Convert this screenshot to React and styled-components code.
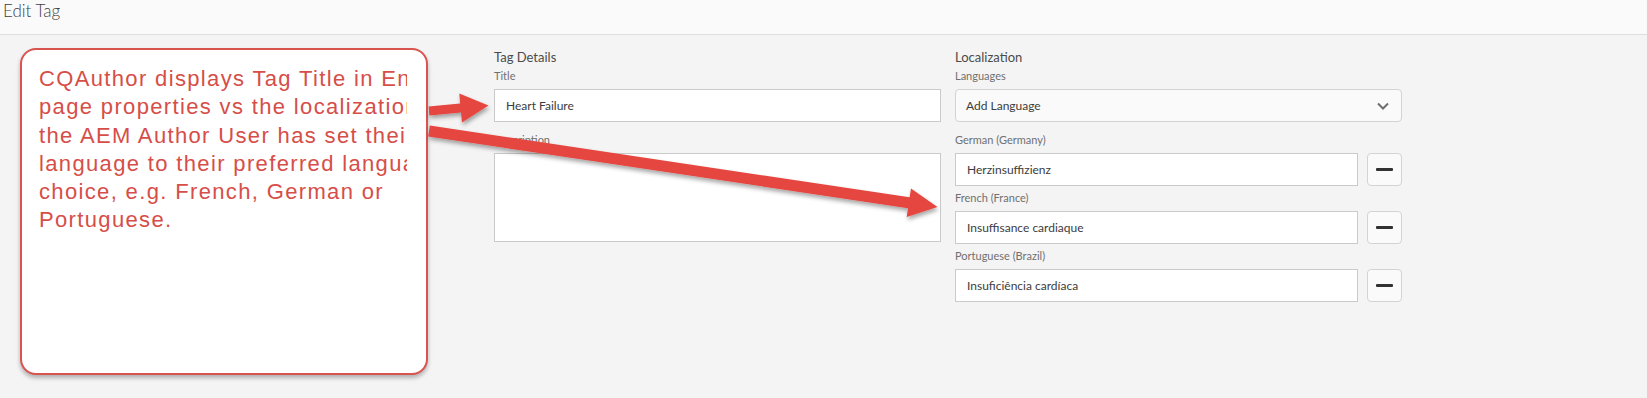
import React from 'react';
import styled, { createGlobalStyle } from 'styled-components';

const GlobalStyle = createGlobalStyle`
  html, body {
    margin: 0;
    padding: 0;
    background: #f4f4f4;
  }
  body {
    font-family: 'Lato', 'Open Sans', sans-serif;
  }
`;

const Page = styled.div`
  position: relative;
  width: 1647px;
  height: 398px;
  overflow: hidden;
  background: #f4f4f4;
`;

const Header = styled.header`
  height: 35px;
  box-sizing: border-box;
  background: #fafafa;
  border-bottom: 1px solid #dedede;
  padding: 1px 3px 0;
  font-size: 17px;
  line-height: 20px;
  font-weight: 300;
  color: #3f3f3f;
`;

const Body = styled.main`
  display: flex;
  align-items: flex-start;
`;

const Callout = styled.div`
  width: 408px;
  height: 327px;
  box-sizing: border-box;
  margin: 13px 0 0 20px;
  padding: 15px 19px 0 17px;
  background: #fff;
  border: 2px solid #d9534f;
  border-radius: 16px;
  box-shadow: 0 3px 4px rgba(0, 0, 0, 0.28);
`;

const CalloutText = styled.div`
  overflow: hidden;
  font-family: 'Liberation Sans', Arial, sans-serif;
  font-size: 22px;
  line-height: 28.3px;
  letter-spacing: 1.35px;
  color: #d64e48;
`;

const CalloutLine = styled.div`
  white-space: nowrap;
`;

const Form = styled.div`
  display: flex;
  gap: 14px;
  margin: 14px 0 0 66px;
`;

const Column = styled.section`
  width: 447px;
  display: flex;
  flex-direction: column;
`;

const SectionTitle = styled.h2`
  margin: 0 0 4px;
  font-size: 13px;
  line-height: 16px;
  font-weight: 400;
  color: #4b4b4b;
`;

const Field = styled.div`
  display: flex;
  flex-direction: column;
  margin-top: ${p => p.$top || 0}px;
`;

const Label = styled.label`
  font-size: 11px;
  line-height: 14px;
  color: #707070;
  margin-bottom: 6px;
`;

const TextInput = styled.input`
  height: 33px;
  width: 100%;
  box-sizing: border-box;
  margin: 0;
  padding: 0 11px;
  border: 1px solid #cacaca;
  border-radius: 0;
  background: #fff;
  font-family: inherit;
  font-size: 12px;
  color: #3c3c3c;
  outline: none;
`;

const TextArea = styled.textarea`
  height: 89px;
  width: 100%;
  box-sizing: border-box;
  margin: 0;
  padding: 8px 11px;
  border: 1px solid #cacaca;
  border-radius: 0;
  background: #fff;
  font-family: inherit;
  font-size: 12px;
  resize: none;
  outline: none;
`;

const Select = styled.div`
  height: 33px;
  box-sizing: border-box;
  display: flex;
  align-items: center;
  justify-content: space-between;
  padding: 0 12px 0 10px;
  border: 1px solid #d3d3d3;
  border-radius: 4px;
  background: #fafafa;
  font-size: 12px;
  color: #3c3c3c;
`;

const LangRow = styled.div`
  display: flex;
  gap: 9px;
`;

const MinusButton = styled.button`
  flex: 0 0 35px;
  height: 33px;
  box-sizing: border-box;
  display: flex;
  align-items: center;
  justify-content: center;
  padding: 0;
  border: 1px solid #d3d3d3;
  border-radius: 4px;
  background: #fafafa;
  cursor: pointer;

  span {
    display: block;
    width: 17px;
    height: 3px;
    border-radius: 1px;
    background: #323232;
  }
`;

const Overlay = styled.svg`
  position: absolute;
  top: 0;
  left: 0;
  pointer-events: none;
`;

const arrowPoints = (x1, y1, x2, y2, shaft, head, headLen) => {
  const len = Math.hypot(x2 - x1, y2 - y1);
  const dx = (x2 - x1) / len;
  const dy = (y2 - y1) / len;
  const nx = -dy;
  const ny = dx;
  const bx = x2 - dx * headLen;
  const by = y2 - dy * headLen;
  const s = shaft / 2;
  const h = head / 2;
  const pts = [
    [x1 + nx * s, y1 + ny * s],
    [bx + nx * s, by + ny * s],
    [bx + nx * h, by + ny * h],
    [x2, y2],
    [bx - nx * h, by - ny * h],
    [bx - nx * s, by - ny * s],
    [x1 - nx * s, y1 - ny * s],
  ];
  return pts.map(p => p.map(v => v.toFixed(1)).join(',')).join(' ');
};

const calloutLines = [
  'CQAuthor displays Tag Title in English in',
  'page properties vs the localization that',
  'the AEM Author User has set their',
  'language to their preferred language of',
  'choice, e.g. French, German or',
  'Portuguese.',
];

const languages = [
  { label: 'German (Germany)', value: 'Herzinsuffizienz' },
  { label: 'French (France)', value: 'Insuffisance cardiaque' },
  { label: 'Portuguese (Brazil)', value: 'Insuficiência cardíaca' },
];

export default function App() {
  return (
    <Page>
      <GlobalStyle />
      <Header>Edit Tag</Header>
      <Body>
        <Callout>
          <CalloutText>
            {calloutLines.map(line => (
              <CalloutLine key={line}>{line}</CalloutLine>
            ))}
          </CalloutText>
        </Callout>

        <Form>
          <Column>
            <SectionTitle>Tag Details</SectionTitle>
            <Field>
              <Label>Title</Label>
              <TextInput readOnly defaultValue="Heart Failure" />
            </Field>
            <Field $top={11}>
              <Label>Description</Label>
              <TextArea readOnly defaultValue="" />
            </Field>
          </Column>

          <Column>
            <SectionTitle>Localization</SectionTitle>
            <Field>
              <Label>Languages</Label>
              <Select>
                Add Language
                <svg width="12" height="8" viewBox="0 0 12 8">
                  <path d="M1 1.5 L6 6.5 L11 1.5" fill="none" stroke="#6e6e6e" strokeWidth="2" />
                </svg>
              </Select>
            </Field>
            {languages.map((lang, i) => (
              <Field key={lang.label} $top={i === 0 ? 11 : 5}>
                <Label>{lang.label}</Label>
                <LangRow>
                  <TextInput readOnly defaultValue={lang.value} />
                  <MinusButton><span /></MinusButton>
                </LangRow>
              </Field>
            ))}
          </Column>
        </Form>
      </Body>

      <Overlay width="1647" height="398">
        <defs>
          <filter id="arrowShadow" x="-10%" y="-50%" width="120%" height="200%">
            <feDropShadow dx="1" dy="3" stdDeviation="2" floodColor="#000" floodOpacity="0.35" />
          </filter>
        </defs>
        <g fill="#e5463f" filter="url(#arrowShadow)">
          <polygon points={arrowPoints(429, 111, 488.5, 105.5, 9, 29, 28)} />
          <polygon points={arrowPoints(429, 131, 937.5, 207, 11, 29, 29)} />
        </g>
      </Overlay>
    </Page>
  );
}
